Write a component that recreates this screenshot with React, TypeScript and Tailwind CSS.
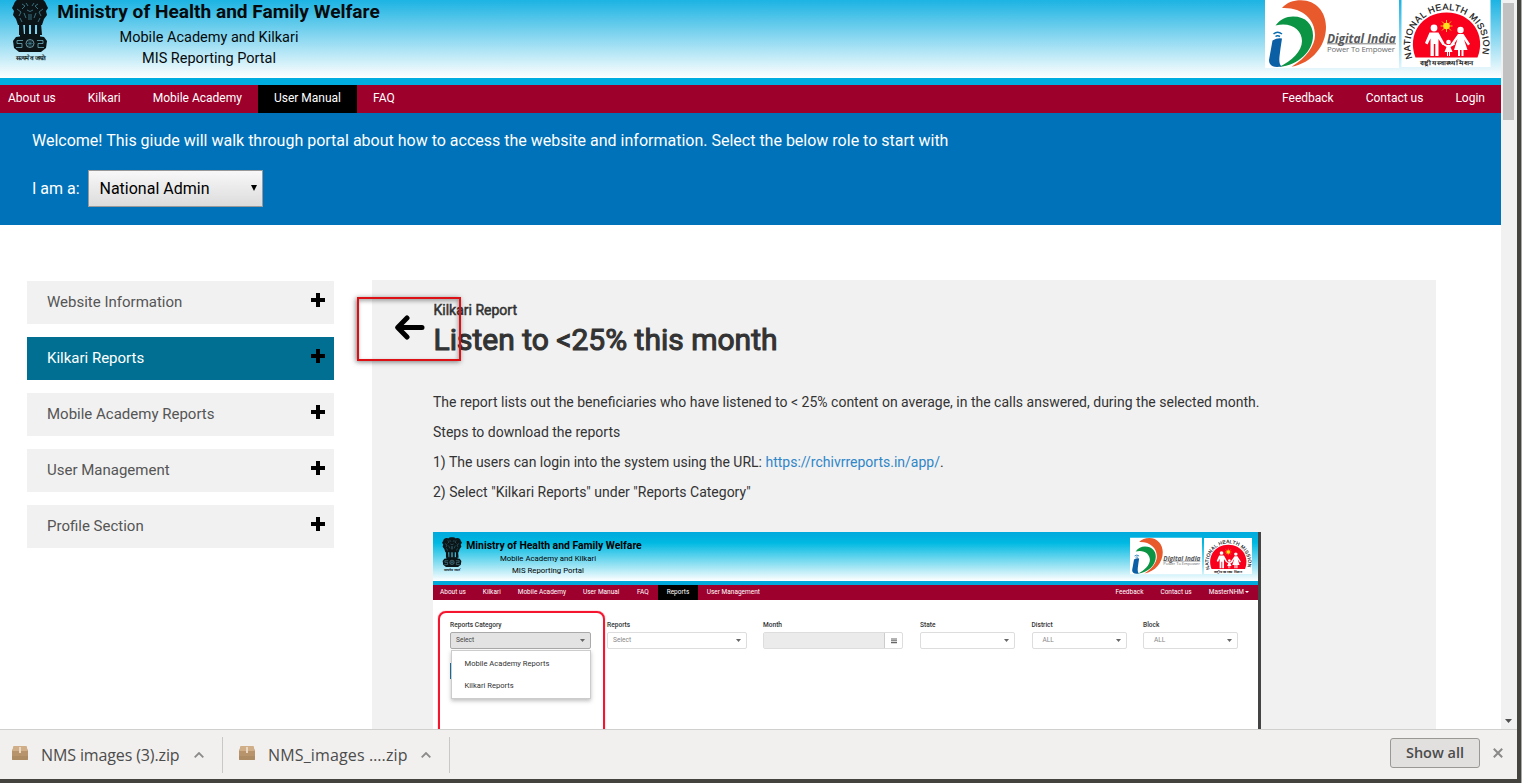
import type { ReactNode } from "react";

function Emblem({ className }: { className: string }) {
  return (
    <svg viewBox="0 0 40 66" className={className}>
      <g fill="#0b1518">
        <path d="M13 2c2-3 12-3 14 0 4-2 8 0 9 4l2 4-2 3 1 4-3 4-2 6H8l-2-6-3-4 1-4-2-3 2-4c1-4 5-6 9-4Z" />
        <path d="M9 25h4l1 12H9Zm6 1h4v11h-4Zm6 0h4v11h-4Zm6-1h4l1 12h-5Z" />
        <path d="M6 39q14-3 28 0l3 4-1 7-5 4H9l-5-4-1-7Z" />
        <path d="M10 36h20v4H10Z" />
      </g>
      <g fill="none" stroke="#4b97aa" strokeWidth="0.7">
        <path d="M12 6l3 2-3 3m16-5-3 2 3 3M16 5l2 3m6-3-2 3M17 12q3 3 6 0M7 11l4 3-2 4m24-7-4 3 2 4M14 15l2 5m10-5-2 5M19 16v6M21 16v6M10 20l2 4m18-4-2 4" />
        <path d="M13 42.500H7v3h5v4H6m21-7h6v3h-5v4h6" stroke="#6fb0c0" strokeWidth="0.800" />
        <circle cx="20" cy="45.500" r="4" stroke="#8fc9d6" />
        <path d="M20 42v7M16.500 45.500h7M17.500 43l5 5m0-5-5 5" strokeWidth="0.500" />
      </g>
      <text x="5.500" y="62" fontSize="6" fontWeight="700" textLength="30" lengthAdjust="spacingAndGlyphs" fill="#0b1518">
        सत्यमेव जयते
      </text>
    </svg>
  );
}

function DigitalIndia({ className }: { className: string }) {
  return (
    <svg viewBox="0 0 134 68" className={className}>
      <path fill="#fff" d="M0 0h134v68H0z" />
      <path fill="#e8592c" d="M17 8C22 2.500 28 .3 36 .3 51 .3 61 12 61 27c0 19-14 36-34.500 39.800C41 58 50 46 50 35 50 19 37 7 17 8Z" />
      <path fill="#0b9444" d="M10.500 25.500C15 19.500 21 16.500 28 16.500c13 0 20 8 20 19C48 51 34 65 14 67 27 61 37 51 37 41 37 30 26 21.500 10.500 25.500Z" />
      <path fill="#0a5fa5" d="M7.500 40.500q5-3 9.500-2-1.500 9-2.500 18c-.5 5 0 8 2 10C9 68 4 66 4 60Z" />
      <g fill="none" stroke="#0a6cae" strokeWidth="1.500">
        <path d="M8.500 34q4-3.500 8.500 0M10.500 36.500q2-1.600 4.500 0" />
      </g>
      <text x="62" y="42.500" fontSize="12" fontWeight="700" fontStyle="italic" fontFamily="Open Sans" textLength="69" fill="#58595b">
        Digital India
      </text>
      <path stroke="#58595b" strokeWidth="0.800" d="M62 43.800h69" />
      <text x="62" y="51.500" fontSize="7.800" fontFamily="Open Sans" textLength="68" fill="#6b6c6e">
        Power To Empower
      </text>
    </svg>
  );
}

function HealthMission({ className, arc }: { className: string; arc: string }) {
  return (
    <svg viewBox="0 0 89 67" className={className}>
      <path fill="#fff" d="M0 0h89v67H0z" />
      <path fill="#f9001c" d="M14 57.500C5 35 20 12.500 45 12.500s40 22.500 31 45Z" />
      <path id={arc} fill="none" d="M11 58A36.500 35.500 0 1 1 79.500 57.500" />
      <text fontSize="9" fontFamily="Liberation Sans" fill="#111" stroke="#111" strokeWidth="0.200">
        <textPath href={"#" + arc} textLength="134">NATIONAL HEALTH MISSION</textPath>
      </text>
      <path stroke="#ffd21c" strokeWidth="0.900" d="M45 20v12M39 26h12M40.500 21.500l9 9m0-9-9 9" />
      <circle cx="45" cy="26" r="3.300" fill="#ffe01c" />
      <g fill="#fff">
        <circle cx="32.500" cy="28" r="3.400" />
        <circle cx="59" cy="30" r="3.200" />
        <circle cx="47" cy="42" r="2.300" />
        <path d="M28 32.500h9l6 11-2 1.500-4-6V56h-3.200V44h-1.500v12H29V38.500l-3 6-2.500-1.500Z" />
        <path d="M56.500 34h5.500l6.500 10-2 1.500-4-6 3.500 10.500H62v6h-2v-6h-1.500v6h-2v-6h-4l3.500-11-5 7-2-1.500Z" />
        <path d="M45.500 45h3l4.500-2 .5 1.500-4.500 2.500 2 5h-2.500v4h-1v-4h-1v4h-1v-4H43l2-5-4-2.500.5-1.500Z" />
      </g>
      <text x="18" y="65" fontSize="6" fontWeight="700" textLength="53" lengthAdjust="spacingAndGlyphs" fill="#222">
        राष्ट्रीय स्वास्थ्य मिशन
      </text>
    </svg>
  );
}

function Caret({ className }: { className: string }) {
  return (
    <svg viewBox="0 0 8 8" preserveAspectRatio="none" className={className} fill="currentColor">
      <path d="M0 0h8L4 8Z" />
    </svg>
  );
}

function NavItem({ children, active }: { children: ReactNode; active?: boolean }) {
  return (
    <a className={active ? "h-7 bg-black px-4 leading-[26px]" : "h-7 px-4 leading-[26px]"}>{children}</a>
  );
}

function SideItem({ label, active }: { label: string; active?: boolean }) {
  return (
    <li
      className={
        active
          ? "flex h-[43px] items-center justify-between bg-[#006f91] pl-5 pr-[9px] text-white"
          : "flex h-[43px] items-center justify-between bg-[#f1f1f1] pl-5 pr-[9px] text-[#555]"
      }
    >
      <span className="pb-px">{label}</span>
      <svg viewBox="0 0 14 14" className="mb-[5px] h-3.5 w-3.5">
        <path d="M5 0h4v5h5v4H9v5H5V9H0V5h5Z" fill="#000" />
      </svg>
    </li>
  );
}

function MiniNav({ children }: { children: ReactNode }) {
  return <span className="px-[8.5px] leading-[14px]">{children}</span>;
}

function MiniField({
  label,
  value,
  box,
  dark,
  children,
}: {
  label: string;
  value?: string;
  box: string;
  dark?: boolean;
  children?: ReactNode;
}) {
  return (
    <div className="relative flex flex-col">
      <span className="h-[13px] text-[6.6px] font-medium leading-[12px] text-[#333]">{label}</span>
      <div
        className={
          (dark ? "bg-[#e3e3e3] border-[#aaa] text-[#444] " : "bg-white border-[#ddd] text-[#888] ") +
          "flex h-[17px] items-center justify-between rounded-[2px] border pr-[5px] text-[6.6px] leading-none " +
          box
        }
      >
        <span>{value}</span>
        <Caret className="h-[3px] w-[5px] text-[#666]" />
      </div>
      {children}
    </div>
  );
}

function MiniPortal() {
  return (
    <div className="relative mt-[30px] flex h-[220px] w-[828px] border-r-[3px] border-[#444] bg-white font-[Roboto,sans-serif]">
      <div className="flex w-full flex-col">
        <div className="flex h-[49px] justify-between bg-[linear-gradient(#00a9dc,#00b9e2_22%,#fff)]">
          <div className="flex pl-[8px] pt-[5px]">
            <Emblem className="h-[37px] w-[22px]" />
            <div className="flex w-[180px] flex-col items-center whitespace-nowrap pl-[2px] text-black">
              <span className="h-[16px] text-[10.400px] font-bold leading-[17px]">Ministry of Health and Family Welfare</span>
              <span className="mr-[12px] text-[7.800px] leading-[12px]">Mobile Academy and Kilkari</span>
              <span className="mr-[12px] text-[7.800px] leading-[11px]">MIS Reporting Portal</span>
            </div>
          </div>
          <div className="flex gap-[2px] pr-[6px] pt-[5px]">
            <DigitalIndia className="h-[38px] w-[72px]" />
            <HealthMission className="h-[38px] w-[48px]" arc="arc-small" />
          </div>
        </div>
        <div className="h-[4px] bg-[#00a9dc]" />
        <div className="flex h-[15px] justify-between bg-[#9e002e] text-[6.500px] text-white">
          <div className="-ml-[1.500px] flex">
            <MiniNav>About us</MiniNav>
            <MiniNav>Kilkari</MiniNav>
            <MiniNav>Mobile Academy</MiniNav>
            <MiniNav>User Manual</MiniNav>
            <span className="pl-[9px] pr-[8.500px] leading-[14px]">FAQ</span>
            <span className="ml-[1px] bg-black px-[8.500px] leading-[14px]">Reports</span>
            <span className="px-[9px] leading-[14px]">User Management</span>
          </div>
          <div className="flex">
            <MiniNav>Feedback</MiniNav>
            <MiniNav>Contact us</MiniNav>
            <span className="flex pl-[8.500px] pr-[9px] leading-[14px]">
              MasterNHM
              <Caret className="ml-px mt-[6px] h-[2px] w-[4px]" />
            </span>
          </div>
        </div>
        <div className="flex pl-[17px] pt-[19px]">
          <MiniField label="Reports Category" value="Select" dark box="w-[141px] pl-[5px]">
            <div className="absolute left-0 top-[44px] h-[16px] w-[2px] bg-[#1779a5]" />
            <div className="absolute left-[1px] top-[31px] flex h-[49px] w-[140px] flex-col gap-[12px] whitespace-nowrap border border-[#ccc] bg-white pl-[12.500px] pt-[8px] text-[7.600px] leading-[10px] text-[#333] shadow-[0_2px_4px_rgba(0,0,0,0.25)]">
              <span>Mobile Academy Reports</span>
              <span>Kilkari Reports</span>
            </div>
          </MiniField>
          <div className="ml-[16px]">
            <MiniField label="Reports" value="Select" box="w-[140px] pl-[5px]" />
          </div>
          <div className="ml-[16px] flex flex-col">
            <span className="h-[13px] text-[6.600px] font-medium leading-[12px] text-[#333]">Month</span>
            <div className="flex h-[17px] w-[140px] rounded-[2px] border border-[#ddd]">
              <div className="w-[121px] border-r border-[#ccc] bg-[#ebebeb]" />
              <svg viewBox="0 0 8 7" className="m-auto h-[6px] w-[6px]">
                <path d="M0 0h8v1.500H0zM0 2.500h8v1H0zM0 4.500h8v2H0z" fill="#666" />
              </svg>
            </div>
          </div>
          <div className="ml-[17px]">
            <MiniField label="State" box="w-[95px] pl-[10px]" />
          </div>
          <div className="ml-[16.500px]">
            <MiniField label="District" value="ALL" box="w-[95px] pl-[10px]" />
          </div>
          <div className="ml-[16.500px]">
            <MiniField label="Block" value="ALL" box="w-[95px] pl-[10px]" />
          </div>
        </div>
      </div>
      <div className="absolute left-[5px] top-[79px] h-[160px] w-[167px] rounded-[8px] border-[2px] border-[#f5152f] shadow-[0_0_1px_#f5152f]" />
    </div>
  );
}

function Download({ name, spacing }: { name: string; spacing: string }) {
  return (
    <div className="flex h-[36px] items-center border-r border-[#c9c8c6] pl-3 pr-[18px]">
      <svg viewBox="0 0 16 14" className="mb-[3px] h-3.5 w-4">
        <path d="M2 0h12l2 5v8a1 1 0 0 1-1 1H1a1 1 0 0 1-1-1V5Z" fill="#b7946c" />
        <path d="M1.500 0h13l1.200 5H.3Z" fill="#cfae88" />
        <path d="M0 10h16v3a1 1 0 0 1-1 1H1a1 1 0 0 1-1-1Z" fill="#ad8b63" />
        <path d="M7 1h2v6H7Z" fill="#ead8c2" />
      </svg>
      <span className={"ml-[13px] w-[139px] whitespace-nowrap " + spacing}>{name}</span>
      <svg viewBox="0 0 10 6" className="ml-[14px] h-1.5 w-2.5" fill="none" stroke="#8b8b89" strokeWidth="1.800">
        <path d="M.7 5.300 5 1l4.300 4.300" />
      </svg>
    </div>
  );
}

export default function App() {
  return (
    <div className="flex h-[783px] w-[1522px] overflow-hidden bg-[#45433d] font-[Roboto,sans-serif]">
      <div className="flex h-[779px] w-[1517px] flex-col">
        <div className="flex h-[729px] bg-white">
          <main className="flex w-[1501px] flex-col overflow-hidden">
            <header className="flex h-[78px] shrink-0 justify-between bg-[linear-gradient(#1cb3e3,#fff)]">
              <div className="flex pl-[10px]">
                <Emblem className="-mt-0.5 h-[66px] w-10" />
                <div className="flex w-[331px] flex-col items-center text-[#050a0c]">
                  <span className="ml-[6px] whitespace-nowrap text-[19.100px] font-bold leading-6">Ministry of Health and Family Welfare</span>
                  <span className="mr-[13px] mt-[4px] text-[14.500px] leading-5">Mobile Academy and Kilkari</span>
                  <span className="mr-[13px] text-[14.500px] leading-[22px]">MIS Reporting Portal</span>
                </div>
              </div>
              <div className="flex gap-[2px] pr-[10px]">
                <DigitalIndia className="h-[68px] w-[134px]" />
                <HealthMission className="h-[67px] w-[90px]" arc="arc-large" />
              </div>
            </header>
            <div className="h-[7px] shrink-0 bg-[#00ade0]" />
            <nav className="flex h-7 shrink-0 justify-between bg-[#9c002b] text-[12px] text-white">
              <div className="-ml-2 flex">
                <NavItem>About us</NavItem>
                <NavItem>Kilkari</NavItem>
                <NavItem>Mobile Academy</NavItem>
                <NavItem active>User Manual</NavItem>
                <NavItem>FAQ</NavItem>
              </div>
              <div className="flex">
                <NavItem>Feedback</NavItem>
                <NavItem>Contact us</NavItem>
                <NavItem>Login</NavItem>
              </div>
            </nav>
            <section className="flex h-28 shrink-0 flex-col bg-[#0072ba] pl-8 pt-[17px] text-[16px] text-white">
              <p className="leading-[22px]">
                Welcome! This giude will walk through portal about how to access the website and information. Select the below role to start with
              </p>
              <div className="mt-[18px] flex items-center">
                <span className="w-[56px]">I am a:</span>
                <div className="flex h-[37px] w-[175px] items-center justify-between border border-[#999] bg-[linear-gradient(#f8f8f8,#dcdcdc)] pl-[10.500px] pr-[5px] text-black">
                  <span>National Admin</span>
                  <Caret className="mb-px h-[6px] w-[6px]" />
                </div>
              </div>
            </section>
            <div className="flex">
              <ul className="ml-[27px] mt-[56px] flex w-[307px] flex-col gap-[13px] text-[15px]">
                <SideItem label="Website Information" />
                <SideItem label="Kilkari Reports" active />
                <SideItem label="Mobile Academy Reports" />
                <SideItem label="User Management" />
                <SideItem label="Profile Section" />
              </ul>
              <article className="relative ml-[38px] mt-[55px] h-[460px] w-[1064px] bg-[#f1f1f1] pl-[61px] pt-[19px] text-[14px] text-[#333]">
                <h4 className="pl-[0.500px] leading-[22px] [-webkit-text-stroke:0.500px_#333]">Kilkari Report</h4>
                <h2 className="h-[38px] pl-[0.500px] text-[30px] leading-[38px] [-webkit-text-stroke:1.100px_#333]">Listen to &lt;25% this month</h2>
                <p className="mt-[33px] leading-5">
                  The report lists out the beneficiaries who have listened to &lt; 25% content on average, in the calls answered, during the selected month.
                </p>
                <p className="mt-2.5 leading-5">Steps to download the reports</p>
                <p className="mt-2.5 leading-5">
                  1) The users can login into the system using the URL: <a className="text-[#2f86c8]">https://rchivrreports.in/app/</a>.
                </p>
                <p className="mt-2.5 leading-5">2) Select "Kilkari Reports" under "Reports Category"</p>
                <MiniPortal />
                <svg viewBox="0 0 30 25" className="absolute left-[23px] top-[35px] h-[25px] w-[30px]" fill="none" stroke="#000" strokeWidth="5" strokeLinecap="round" strokeLinejoin="round">
                  <path d="M12 3 2.700 12.500 12 22M3.500 12.500H27" />
                </svg>
                <div className="absolute left-[-15px] top-[17px] h-[64px] w-[104px] border-2 border-[#dd1015] shadow-[-1px_1px_5px_rgba(0,0,0,0.5),inset_-1px_2px_4px_rgba(0,0,0,0.35)]" />
              </article>
            </div>
          </main>
          <div className="flex w-4 flex-col items-center justify-between bg-[#f1f1f1] pb-[6px] pt-[3px]">
            <div className="mr-0.5 h-[117px] w-[11px] bg-[#c1c1c1]" />
            <Caret className="mr-px h-1 w-[7px] text-[#505050]" />
          </div>
        </div>
        <footer className="flex h-[50px] items-center border-t border-[#d0d0ce] bg-[#f1f0ee] font-['Open_Sans',sans-serif] text-[16px] text-[#4c4c4c]">
          <Download name="NMS images (3).zip" spacing="tracking-[-0.12px]" />
          <div className="ml-[4px]">
            <Download name="NMS_images ….zip" spacing="tracking-[0.14px]" />
          </div>
          <div className="mb-[4px] ml-auto mr-[14px] flex items-center gap-[13px]">
            <button className="h-[30px] w-[90px] rounded-[3px] border border-[#999894] bg-[#e1e0de] pt-px text-[14.500px] font-semibold leading-none">Show all</button>
            <svg viewBox="0 0 10 10" className="h-2.5 w-2.5" stroke="#8a8a88" strokeWidth="2">
              <path d="m.8.8 8.400 8.400m0-8.400L.8 9.200" />
            </svg>
          </div>
        </footer>
      </div>
      <div className="ml-auto w-px bg-[#aaa]" />
    </div>
  );
}
